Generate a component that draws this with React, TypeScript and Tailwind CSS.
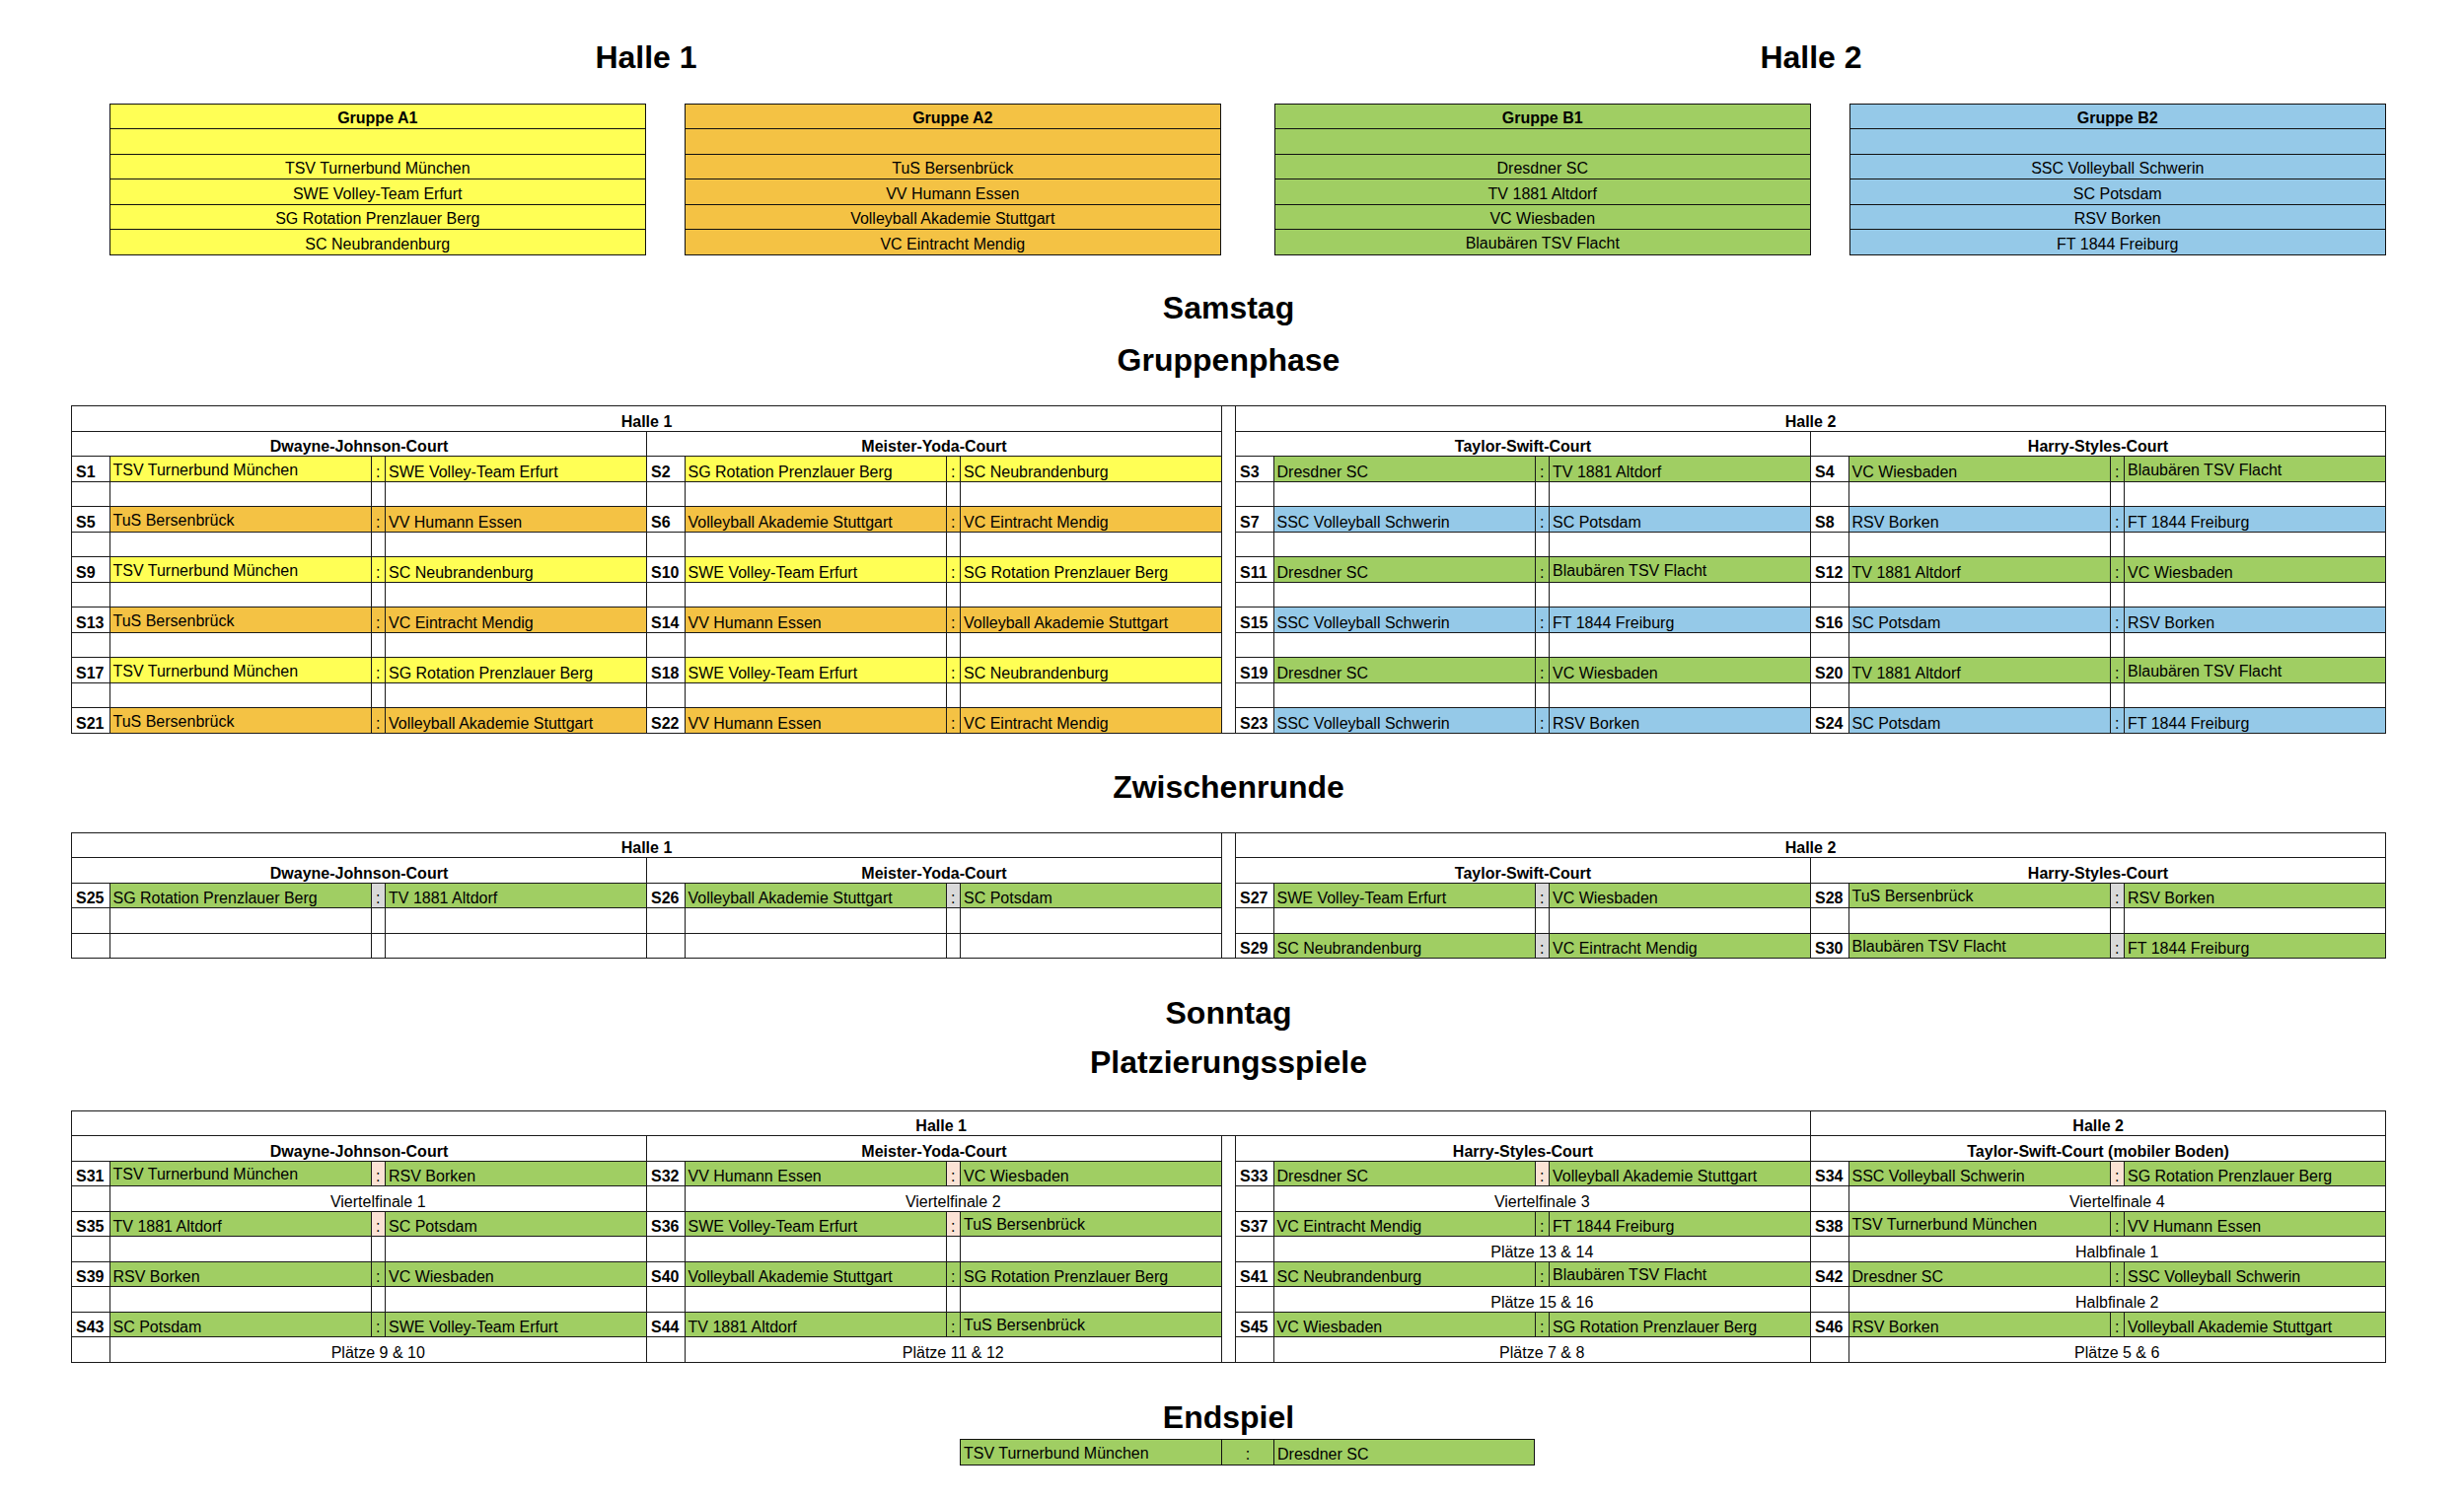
import React from "react";

type Row =
  | { k: "g"; s: string; a: string; b: string; c: string; cc?: string }
  | { k: "e" }
  | { k: "l"; t: string };

const BG: Record<string, string> = {
  Y: "bg-[#FFFF55]",
  O: "bg-[#F4C244]",
  G: "bg-[#A0CE63]",
  B: "bg-[#95C9E8]",
  P: "bg-[#FBE2D5]",
  D: "bg-[#D9D9D9]",
  W: "bg-white",
};

const RAISED = new Set(["TSV Turnerbund München", "TuS Bersenbrück", "Blaubären TSV Flacht"]);

const g = (s: string, a: string, b: string, c: string, cc?: string): Row => ({ k: "g", s, a, b, c, cc });
const e: Row = { k: "e" };
const l = (t: string): Row => ({ k: "l", t });

function TeamCell({ name, bg }: { name: string; bg: string }) {
  return (
    <div
      className={`flex w-[265px] items-end overflow-hidden whitespace-nowrap border-r border-b border-[#1a1a1a] pl-[3px] leading-[18px] ${bg} ${
        RAISED.has(name) ? "pb-[2px]" : "pb-0"
      }`}
    >
      {name}
    </div>
  );
}

function GameRow({ r }: { r: Row }) {
  if (r.k === "l") {
    return (
      <div className="flex h-[25.5px]">
        <div className="w-[38.5px] border-r border-b border-[#1a1a1a] bg-white" />
        <div className="flex w-[544.5px] items-end justify-center border-r border-b border-[#1a1a1a] bg-white leading-[18px]">
          {r.t}
        </div>
      </div>
    );
  }
  if (r.k === "e") {
    return (
      <div className="flex h-[25.5px]">
        <div className="w-[38.5px] border-r border-b border-[#1a1a1a] bg-white" />
        <div className="w-[265px] border-r border-b border-[#1a1a1a] bg-white" />
        <div className="w-[14.5px] border-r border-b border-[#1a1a1a] bg-white" />
        <div className="w-[265px] border-r border-b border-[#1a1a1a] bg-white" />
      </div>
    );
  }
  const bg = BG[r.c];
  const cbg = BG[r.cc ?? r.c];
  return (
    <div className="flex h-[25.5px]">
      <div className="flex w-[38.5px] items-end border-r border-b border-[#1a1a1a] bg-white pl-[4px] font-bold leading-[18px]">
        {r.s}
      </div>
      <TeamCell name={r.a} bg={bg} />
      <div className={`flex w-[14.5px] items-end justify-center border-r border-b border-[#1a1a1a] leading-[18px] ${cbg}`}>:</div>
      <TeamCell name={r.b} bg={bg} />
    </div>
  );
}

function Court({ name, rows }: { name: string; rows: Row[] }) {
  return (
    <div className="flex w-[583px] flex-col">
      <div className="flex h-[25.5px] items-end justify-center border-r border-b border-[#1a1a1a] font-bold leading-[18px]">
        {name}
      </div>
      {rows.map((r, i) => (
        <GameRow key={i} r={r} />
      ))}
    </div>
  );
}

function Gap() {
  return <div className="w-[15px] self-stretch border-r border-b border-[#1a1a1a] bg-white" />;
}

function HallHeader({ name, w }: { name: string; w: string }) {
  return (
    <div className={`flex h-[25.5px] items-end justify-center border-r border-b border-[#1a1a1a] font-bold leading-[18px] ${w}`}>
      {name}
    </div>
  );
}

function Hall({ name, children }: { name: string; children: React.ReactNode }) {
  return (
    <div className="flex w-[1166px] flex-col">
      <HallHeader name={name} w="w-[1166px]" />
      <div className="flex">{children}</div>
    </div>
  );
}

function GroupBox({ title, teams, color }: { title: string; teams: string[]; color: string }) {
  const bg = BG[color];
  const rows = [title, "", ...teams];
  return (
    <div className={`flex w-[544.5px] flex-col border-l border-r border-t border-[#111] ${bg}`}>
      {rows.map((t, i) => (
        <div
          key={i}
          className={`flex h-[25.5px] items-end justify-center border-b border-[#111] leading-[18px] ${i === 0 ? "font-bold" : ""} ${
            t === "Blaubären TSV Flacht" ? "pb-[2px]" : "pb-[1px]"
          }`}
        >
          {t}
        </div>
      ))}
    </div>
  );
}

function Title({ children, className }: { children: React.ReactNode; className: string }) {
  return (
    <div className={`ml-[72px] h-[32px] w-[2347px] text-center text-[32px] font-bold leading-[32px] ${className}`}>{children}</div>
  );
}

export default function App() {
  const dwayne1: Row[] = [
    g("S1", "TSV Turnerbund München", "SWE Volley-Team Erfurt", "Y"), e,
    g("S5", "TuS Bersenbrück", "VV Humann Essen", "O"), e,
    g("S9", "TSV Turnerbund München", "SC Neubrandenburg", "Y"), e,
    g("S13", "TuS Bersenbrück", "VC Eintracht Mendig", "O"), e,
    g("S17", "TSV Turnerbund München", "SG Rotation Prenzlauer Berg", "Y"), e,
    g("S21", "TuS Bersenbrück", "Volleyball Akademie Stuttgart", "O"),
  ];
  const yoda1: Row[] = [
    g("S2", "SG Rotation Prenzlauer Berg", "SC Neubrandenburg", "Y"), e,
    g("S6", "Volleyball Akademie Stuttgart", "VC Eintracht Mendig", "O"), e,
    g("S10", "SWE Volley-Team Erfurt", "SG Rotation Prenzlauer Berg", "Y"), e,
    g("S14", "VV Humann Essen", "Volleyball Akademie Stuttgart", "O"), e,
    g("S18", "SWE Volley-Team Erfurt", "SC Neubrandenburg", "Y"), e,
    g("S22", "VV Humann Essen", "VC Eintracht Mendig", "O"),
  ];
  const taylor1: Row[] = [
    g("S3", "Dresdner SC", "TV 1881 Altdorf", "G"), e,
    g("S7", "SSC Volleyball Schwerin", "SC Potsdam", "B"), e,
    g("S11", "Dresdner SC", "Blaubären TSV Flacht", "G"), e,
    g("S15", "SSC Volleyball Schwerin", "FT 1844 Freiburg", "B"), e,
    g("S19", "Dresdner SC", "VC Wiesbaden", "G"), e,
    g("S23", "SSC Volleyball Schwerin", "RSV Borken", "B"),
  ];
  const harry1: Row[] = [
    g("S4", "VC Wiesbaden", "Blaubären TSV Flacht", "G"), e,
    g("S8", "RSV Borken", "FT 1844 Freiburg", "B"), e,
    g("S12", "TV 1881 Altdorf", "VC Wiesbaden", "G"), e,
    g("S16", "SC Potsdam", "RSV Borken", "B"), e,
    g("S20", "TV 1881 Altdorf", "Blaubären TSV Flacht", "G"), e,
    g("S24", "SC Potsdam", "FT 1844 Freiburg", "B"),
  ];

  const dwayne2: Row[] = [g("S25", "SG Rotation Prenzlauer Berg", "TV 1881 Altdorf", "G", "D"), e, e];
  const yoda2: Row[] = [g("S26", "Volleyball Akademie Stuttgart", "SC Potsdam", "G", "D"), e, e];
  const taylor2: Row[] = [
    g("S27", "SWE Volley-Team Erfurt", "VC Wiesbaden", "G", "D"), e,
    g("S29", "SC Neubrandenburg", "VC Eintracht Mendig", "G", "D"),
  ];
  const harry2: Row[] = [
    g("S28", "TuS Bersenbrück", "RSV Borken", "G", "D"), e,
    g("S30", "Blaubären TSV Flacht", "FT 1844 Freiburg", "G", "D"),
  ];

  const dwayne3: Row[] = [
    g("S31", "TSV Turnerbund München", "RSV Borken", "G", "P"), l("Viertelfinale 1"),
    g("S35", "TV 1881 Altdorf", "SC Potsdam", "G", "P"), e,
    g("S39", "RSV Borken", "VC Wiesbaden", "G"), e,
    g("S43", "SC Potsdam", "SWE Volley-Team Erfurt", "G"), l("Plätze 9 & 10"),
  ];
  const yoda3: Row[] = [
    g("S32", "VV Humann Essen", "VC Wiesbaden", "G", "P"), l("Viertelfinale 2"),
    g("S36", "SWE Volley-Team Erfurt", "TuS Bersenbrück", "G", "P"), e,
    g("S40", "Volleyball Akademie Stuttgart", "SG Rotation Prenzlauer Berg", "G"), e,
    g("S44", "TV 1881 Altdorf", "TuS Bersenbrück", "G"), l("Plätze 11 & 12"),
  ];
  const harry3: Row[] = [
    g("S33", "Dresdner SC", "Volleyball Akademie Stuttgart", "G", "P"), l("Viertelfinale 3"),
    g("S37", "VC Eintracht Mendig", "FT 1844 Freiburg", "G"), l("Plätze 13 & 14"),
    g("S41", "SC Neubrandenburg", "Blaubären TSV Flacht", "G"), l("Plätze 15 & 16"),
    g("S45", "VC Wiesbaden", "SG Rotation Prenzlauer Berg", "G"), l("Plätze 7 & 8"),
  ];
  const taylor3: Row[] = [
    g("S34", "SSC Volleyball Schwerin", "SG Rotation Prenzlauer Berg", "G", "P"), l("Viertelfinale 4"),
    g("S38", "TSV Turnerbund München", "VV Humann Essen", "G"), l("Halbfinale 1"),
    g("S42", "Dresdner SC", "SSC Volleyball Schwerin", "G"), l("Halbfinale 2"),
    g("S46", "RSV Borken", "Volleyball Akademie Stuttgart", "G"), l("Plätze 5 & 6"),
  ];

  return (
    <div className="min-h-[1522px] w-[2498px] bg-white font-['Liberation_Sans',Arial,sans-serif] text-[16px] text-black">
      {/* Hall titles */}
      <div className="ml-[72px] flex pt-[41.5px]">
        <div className="h-[32px] w-[1166px] text-center text-[32px] font-bold leading-[32px]">Halle 1</div>
        <div className="w-[15px]" />
        <div className="h-[32px] w-[1166px] text-center text-[32px] font-bold leading-[32px]">Halle 2</div>
      </div>

      {/* Group boxes */}
      <div className="ml-[72px] mt-[31px] flex">
        <div className="w-[38.5px]" />
        <GroupBox title="Gruppe A1" color="Y" teams={["TSV Turnerbund München", "SWE Volley-Team Erfurt", "SG Rotation Prenzlauer Berg", "SC Neubrandenburg"]} />
        <div className="w-[38.5px]" />
        <GroupBox title="Gruppe A2" color="O" teams={["TuS Bersenbrück", "VV Humann Essen", "Volleyball Akademie Stuttgart", "VC Eintracht Mendig"]} />
        <div className="w-[15px]" />
        <div className="w-[38.5px]" />
        <GroupBox title="Gruppe B1" color="G" teams={["Dresdner SC", "TV 1881 Altdorf", "VC Wiesbaden", "Blaubären TSV Flacht"]} />
        <div className="w-[38.5px]" />
        <GroupBox title="Gruppe B2" color="B" teams={["SSC Volleyball Schwerin", "SC Potsdam", "RSV Borken", "FT 1844 Freiburg"]} />
      </div>

      <Title className="mt-[37px]">Samstag</Title>
      <Title className="mt-[21px]">Gruppenphase</Title>

      <div className="ml-[72px] mt-[30.5px] flex w-[2347px] border-l border-t border-[#1a1a1a]">
        <Hall name="Halle 1">
          <Court name="Dwayne-Johnson-Court" rows={dwayne1} />
          <Court name="Meister-Yoda-Court" rows={yoda1} />
        </Hall>
        <Gap />
        <Hall name="Halle 2">
          <Court name="Taylor-Swift-Court" rows={taylor1} />
          <Court name="Harry-Styles-Court" rows={harry1} />
        </Hall>
      </div>

      <Title className="mt-[38px]">Zwischenrunde</Title>

      <div className="ml-[72px] mt-[30px] flex w-[2347px] border-l border-t border-[#1a1a1a]">
        <Hall name="Halle 1">
          <Court name="Dwayne-Johnson-Court" rows={dwayne2} />
          <Court name="Meister-Yoda-Court" rows={yoda2} />
        </Hall>
        <Gap />
        <Hall name="Halle 2">
          <Court name="Taylor-Swift-Court" rows={taylor2} />
          <Court name="Harry-Styles-Court" rows={harry2} />
        </Hall>
      </div>

      <Title className="mt-[38.5px]">Sonntag</Title>
      <Title className="mt-[18px]">Platzierungsspiele</Title>

      <div className="ml-[72px] mt-[33px] flex w-[2347px] flex-col border-l border-t border-[#1a1a1a]">
        <div className="flex">
          <HallHeader name="Halle 1" w="w-[1764px]" />
          <HallHeader name="Halle 2" w="w-[583px]" />
        </div>
        <div className="flex">
          <Court name="Dwayne-Johnson-Court" rows={dwayne3} />
          <Court name="Meister-Yoda-Court" rows={yoda3} />
          <Gap />
          <Court name="Harry-Styles-Court" rows={harry3} />
          <Court name="Taylor-Swift-Court (mobiler Boden)" rows={taylor3} />
        </div>
      </div>

      <Title className="mt-[39px]">Endspiel</Title>

      <div className="ml-[973px] mt-[6px] flex h-[27px] w-[583px] border border-[#111] bg-[#A0CE63]">
        <div className="flex w-[265px] items-end border-r border-[#111] pb-[2px] pl-[3px] leading-[18px]">TSV Turnerbund München</div>
        <div className="flex w-[53px] items-end justify-center border-r border-[#111] pb-[1px] leading-[18px]">:</div>
        <div className="flex flex-1 items-end pb-[1px] pl-[3px] leading-[18px]">Dresdner SC</div>
      </div>
    </div>
  );
}
